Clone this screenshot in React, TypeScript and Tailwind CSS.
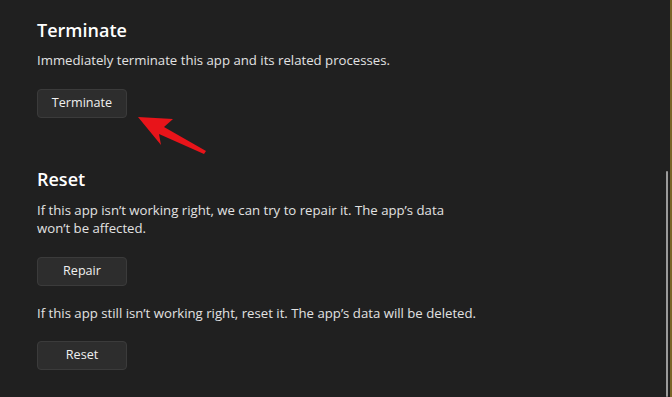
import React from "react";

function Arrow() {
  return (
    <svg
      className="absolute left-0 top-0 pointer-events-none"
      width="672"
      height="397"
      viewBox="0 0 672 397"
    >
      <polygon
        points="138,117 173,119 164,127 206,151 204,154 159,134 161,145"
        fill="#e8141a"
      />
    </svg>
  );
}

function ActionButton({ label }: { label: string }) {
  return (
    <button className="w-[90px] h-[29px] rounded-[4px] bg-[#2d2d2d] border border-[#3b3b3b] text-[12.6px] text-[#f0f0f0] flex items-center justify-center">
      {label}
    </button>
  );
}

export default function App() {
  return (
    <div
      className="relative w-[672px] h-[397px] overflow-hidden bg-[#202020] text-white"
      style={{ fontFamily: '"Open Sans", "Noto Sans", sans-serif' }}
    >
      <div className="flex flex-col pl-[37px]">
        {/* Terminate */}
        <h2 className="mt-[18px] text-[18px] leading-[24px] font-semibold">Terminate</h2>
        <p className="mt-[9px] text-[13.2px] leading-[18px] text-[#e2e2e2]">
          Immediately terminate this app and its related processes.
        </p>
        <div className="mt-[20px]">
          <ActionButton label="Terminate" />
        </div>

        {/* Reset */}
        <h2 className="mt-[49px] text-[18px] leading-[24px] font-semibold">Reset</h2>
        <p className="mt-[10px] w-[430px] text-[13.2px] leading-[18px] text-[#e2e2e2]">
          If this app isn’t working right, we can try to repair it. The app’s data won’t be affected.
        </p>
        <div className="mt-[20px]">
          <ActionButton label="Repair" />
        </div>
        <p className="mt-[18px] text-[13.2px] leading-[19px] text-[#e2e2e2]">
          If this app still isn’t working right, reset it. The app’s data will be deleted.
        </p>
        <div className="mt-[18px]">
          <ActionButton label="Reset" />
        </div>
      </div>

      {/* scrollbar */}
      <div className="absolute right-[4px] top-[171px] bottom-0 w-[2px] rounded-full bg-[#9b9b9b]" />
      <div className="absolute right-0 top-0 bottom-0 w-[2px] bg-[#7a6526]" />

      <Arrow />
    </div>
  );
}
